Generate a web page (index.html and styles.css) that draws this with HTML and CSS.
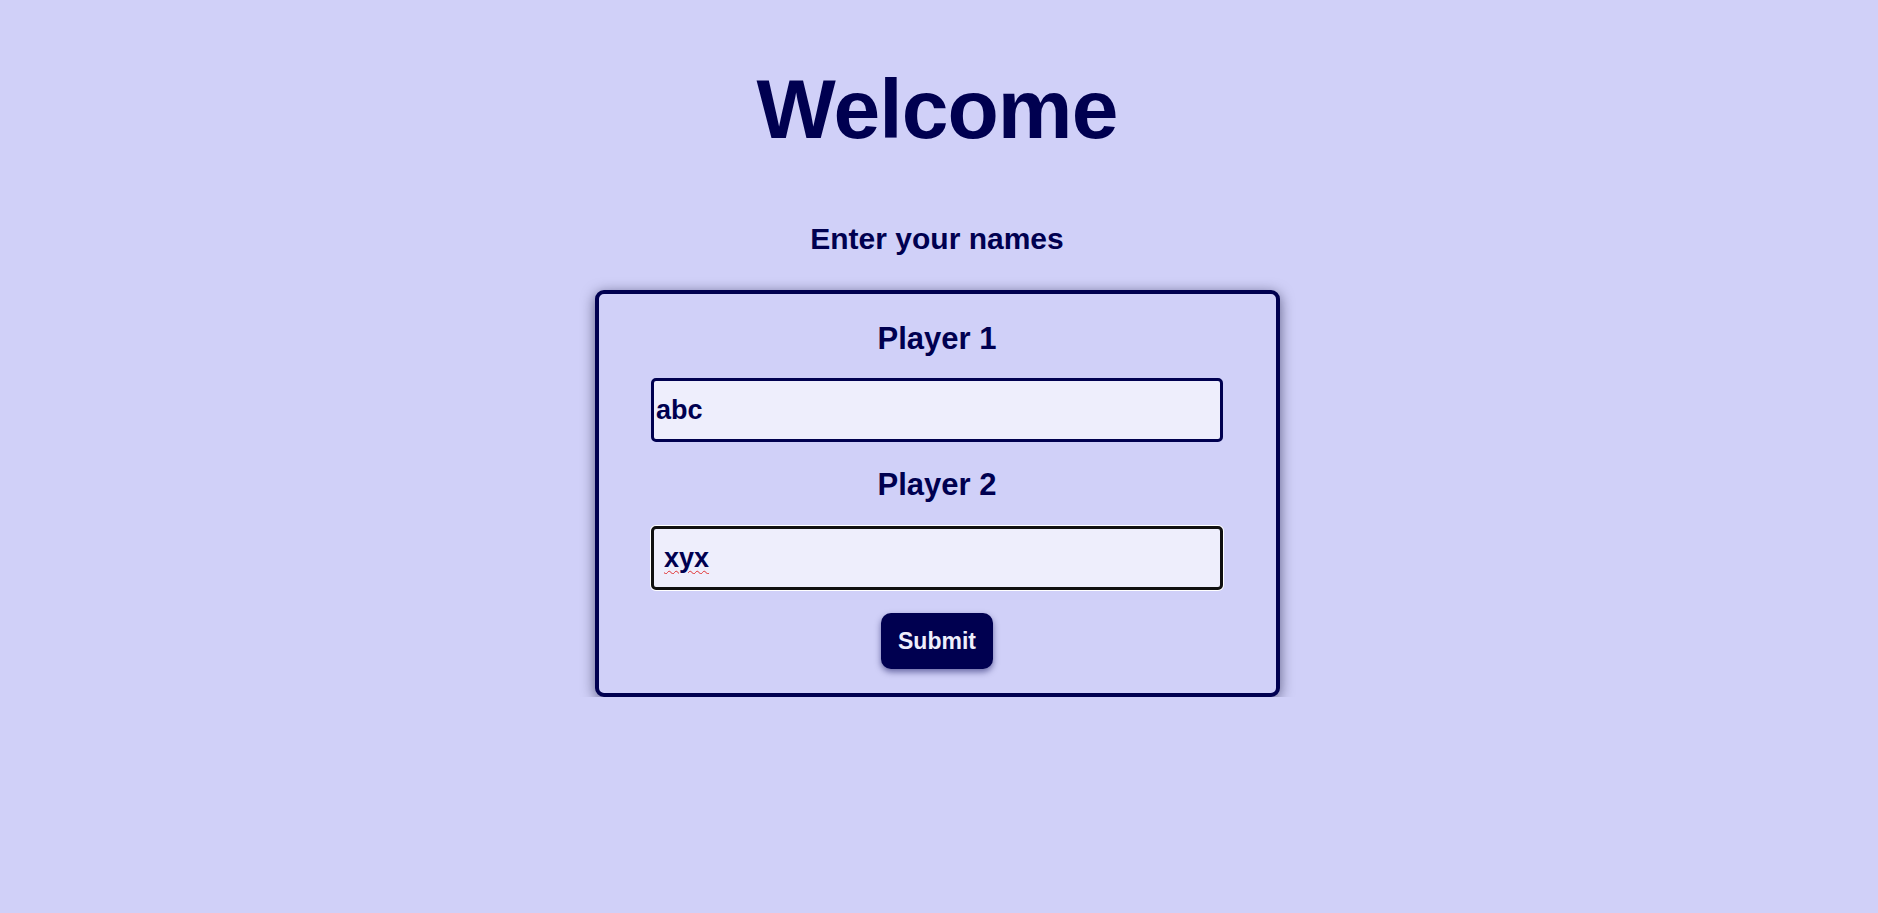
FILE: index.html
```html
<!DOCTYPE html>
<html lang="en">
<head>
<meta charset="utf-8">
<title>Welcome</title>
<link rel="stylesheet" href="styles.css">
</head>
<body>
<main class="page">
  <h1 class="title">Welcome</h1>
  <h2 class="subtitle">Enter your names</h2>
  <form class="card">
    <label class="player-label" for="p1">Player 1</label>
    <input class="name-input first" id="p1" type="text" value="abc">
    <label class="player-label second-label" for="p2">Player 2</label>
    <input class="name-input active" id="p2" type="text" value="xyx" autofocus>
    <button class="submit-btn" type="button">Submit</button>
  </form>
</main>
</body>
</html>
```

FILE: styles.css
```css
html, body {
  margin: 0;
  padding: 0;
  background: #d0d0f8;
}

body {
  font-family: "Liberation Sans", Arial, sans-serif;
  color: #000050;
}

.page {
  display: flex;
  flex-direction: column;
  align-items: center;
  padding-top: 61px;
  padding-left: 0;
  padding-right: 4px;
}

.title {
  margin: 0;
  font-size: 84px;
  line-height: 96px;
  font-weight: 700;
  letter-spacing: -0.9px;
}

.subtitle {
  margin: 64px 0 0;
  font-size: 30px;
  line-height: 36px;
  font-weight: 700;
}

.card {
  box-sizing: border-box;
  width: 685px;
  margin-top: 33px;
  border: 4px solid #000050;
  border-radius: 9px;
  background: #d0d0f8;
  box-shadow: 0 3px 14px rgba(0, 0, 40, 0.55);
  padding: 27px 0 24px;
  display: flex;
  flex-direction: column;
  align-items: center;
}

.player-label {
  font-size: 31px;
  line-height: 36px;
  font-weight: 700;
  margin-bottom: 21px;
}

.second-label {
  margin-top: 25px;
  margin-bottom: 23px;
}

.name-input {
  box-sizing: border-box;
  width: 572px;
  height: 64px;
  border: 3px solid #000050;
  border-radius: 5px;
  background: #eeeefc;
  color: #000050;
  font-family: "Liberation Sans", Arial, sans-serif;
  font-size: 27px;
  font-weight: 700;
  padding: 0 2px;
  margin: 0;
}

.name-input:focus {
  outline: none;
}

.name-input.active {
  border-color: #101010;
  box-shadow: 0 0 0 1px #ffffff;
  padding-left: 10px;
  text-decoration: underline wavy #e03030;
  text-decoration-thickness: 1px;
  text-underline-offset: 3px;
  caret-color: #000050;
}

.submit-btn {
  margin-top: 23px;
  box-sizing: border-box;
  width: 112px;
  height: 56px;
  border: none;
  border-radius: 10px;
  background: #000050;
  color: #eeeefc;
  font-family: "Liberation Sans", Arial, sans-serif;
  font-size: 23px;
  font-weight: 700;
  padding: 0;
  box-shadow: 0 3px 6px rgba(0, 0, 80, 0.5);
  cursor: pointer;
}
```
